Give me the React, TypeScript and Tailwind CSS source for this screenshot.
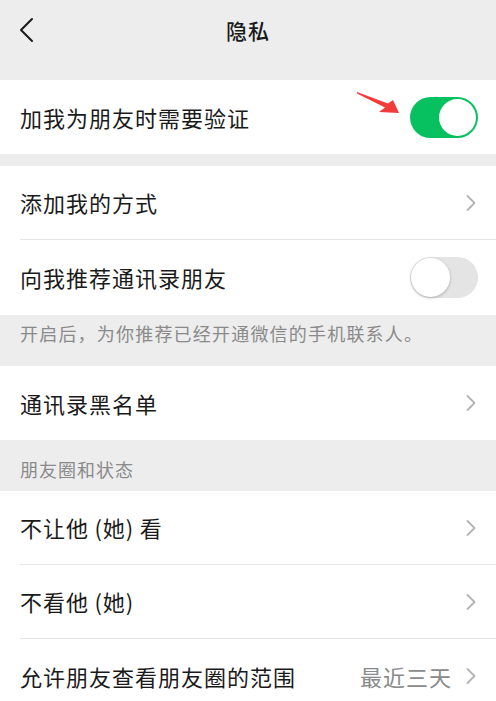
import React from "react";

const font = { fontFamily: '"Noto Sans CJK SC", "Noto Sans", sans-serif' };

function Chevron() {
  return (
    <svg width="10" height="18" viewBox="0 0 10 18" className="shrink-0">
      <polyline points="1.5,2 8.5,9 1.5,16" fill="none" stroke="#b4b4b4" strokeWidth="1.8" strokeLinecap="round" strokeLinejoin="round" />
    </svg>
  );
}

function Toggle({ on }: { on: boolean }) {
  return on ? (
    <div className="w-[68px] h-[41px] rounded-full bg-[#07c160] flex items-center justify-end pr-[2px]">
      <div className="w-[37px] h-[37px] rounded-full bg-white" />
    </div>
  ) : (
    <div className="w-[68px] h-[41px] rounded-full bg-[#e4e4e4] flex items-center justify-start pl-[1px]">
      <div className="w-[39px] h-[39px] rounded-full bg-white shadow-[0_1px_3px_rgba(0,0,0,0.25)]" />
    </div>
  );
}

function Row({ label, right, divider }: { label: string; right: React.ReactNode; divider?: boolean }) {
  return (
    <div className="bg-white pl-5">
      <div className={`h-[74px] flex items-center justify-between pr-[20px] ${divider ? "border-b border-[#e6e6e6]" : ""}`}>
        <span className="text-[22px] text-[#1a1a1a] tracking-[1px] whitespace-pre">{label}</span>
        {right}
      </div>
    </div>
  );
}

export default function App() {
  return (
    <div style={font} className="w-[496px] h-[701px] overflow-hidden bg-[#ededed] relative">
      {/* header */}
      <div className="h-[80px] relative flex items-start justify-center pt-[15px]">
        <svg width="16" height="26" viewBox="0 0 16 26" className="absolute left-[18px] top-[17px]">
          <polyline points="14,2 3,13 14,24" fill="none" stroke="#1a1a1a" strokeWidth="2" strokeLinecap="round" strokeLinejoin="round" />
        </svg>
        <span className="text-[21px] font-medium text-[#1a1a1a] tracking-[1px]">隐私</span>
      </div>

      <div className="bg-white pl-5 pr-[18px] h-[74px] flex items-center justify-between">
        <span className="text-[22px] text-[#1a1a1a] tracking-[1px]">加我为朋友时需要验证</span>
        <Toggle on />
      </div>

      <div className="h-[12px]" />

      <Row label="添加我的方式" right={<Chevron />} divider />
      <div className="bg-white pl-5 pr-[18px] h-[75px] flex items-center justify-between">
        <span className="text-[22px] text-[#1a1a1a] tracking-[1px]">向我推荐通讯录朋友</span>
        <Toggle on={false} />
      </div>

      <div className="h-[51px] pl-5 pt-[5px]">
        <span className="text-[18px] text-[#8a8a8a] tracking-[1.2px]">开启后，为你推荐已经开通微信的手机联系人。</span>
      </div>

      <Row label="通讯录黑名单" right={<Chevron />} />

      <div className="h-[51px] pl-5 pt-[16px]">
        <span className="text-[18px] text-[#8a8a8a] tracking-[1px]">朋友圈和状态</span>
      </div>

      <Row label={"不让他\u2009(她)\u2009看"} right={<Chevron />} divider />
      <Row label={"不看他\u2009(她)"} right={<Chevron />} divider />
      <Row
        label="允许朋友查看朋友圈的范围"
        right={
          <div className="flex items-center gap-[14px]">
            <span className="text-[22px] text-[#8a8a8a] tracking-[1px]">最近三天</span>
            <Chevron />
          </div>
        }
      />

      {/* red arrow annotation */}
      <svg width="50" height="30" viewBox="0 0 50 30" className="absolute left-[356px] top-[88px]">
        <polygon points="1,4 32,15.5 37,12 43,25 23,24 29,19.5 1,5.5" fill="#f23b3b" />
      </svg>
    </div>
  );
}
